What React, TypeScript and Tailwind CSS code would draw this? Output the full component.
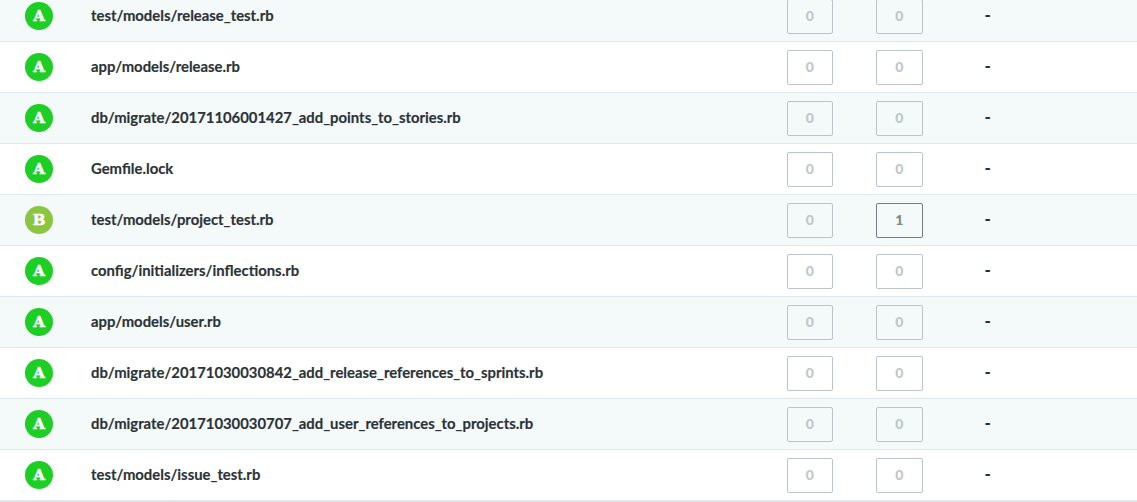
const ROWS = [
  { grade: 'A', path: 'test/models/release_test.rb', second: '0' },
  { grade: 'A', path: 'app/models/release.rb', second: '0' },
  { grade: 'A', path: 'db/migrate/20171106001427_add_points_to_stories.rb', second: '0' },
  { grade: 'A', path: 'Gemfile.lock', second: '0' },
  { grade: 'B', path: 'test/models/project_test.rb', second: '1' },
  { grade: 'A', path: 'config/initializers/inflections.rb', second: '0' },
  { grade: 'A', path: 'app/models/user.rb', second: '0' },
  { grade: 'A', path: 'db/migrate/20171030030842_add_release_references_to_sprints.rb', second: '0' },
  { grade: 'A', path: 'db/migrate/20171030030707_add_user_references_to_projects.rb', second: '0' },
  { grade: 'A', path: 'test/models/issue_test.rb', second: '0' },
]

function Grade({ grade }: { grade: string }) {
  const color = grade === 'A' ? 'bg-[#1dce24]' : 'bg-[#8cc53f]'
  return (
    <span
      className={`flex h-[28px] w-[28px] items-center justify-center rounded-full text-[15px] font-bold leading-none text-white [-webkit-text-stroke:0.5px_white] ${color}`}
      style={{ fontFamily: '"DejaVu Serif", serif' }}
    >
      {grade}
    </span>
  )
}

function Count({ value }: { value: string }) {
  const active = value !== '0'
  return (
    <span
      className={`flex h-[35px] w-[46.5px] shrink-0 items-center justify-center rounded-[2px] border pb-[1px] text-[14px] font-black ${
        active ? 'border-[#727c80] text-[#7d8689]' : 'border-[#bcc4c7] text-[#bfc7ca]'
      }`}
    >
      {value}
    </span>
  )
}

export default function App() {
  return (
    <div
      className="h-[502px] w-full overflow-hidden bg-white text-[#2b3238]"
      style={{ fontFamily: 'Lato, sans-serif' }}
    >
      <div className="-mt-[9px] flex flex-col border-b border-[#dfe8ed]">
        {ROWS.map((row, i) => (
          <div
            key={row.path}
            className={`flex h-[51px] items-center border-b border-[#dfe8ed] ${i % 2 === 0 ? 'bg-[#f4f9fa]' : 'bg-white'}`}
          >
            <div className="ml-[25px] w-[66px] shrink-0">
              <Grade grade={row.grade} />
            </div>
            <div className="w-[695.5px] shrink-0 pb-[2px] text-[14.85px] font-bold [-webkit-text-stroke:0.15px_#2b3238]">
              {row.path}
            </div>
            <Count value="0" />
            <div className="w-[43px] shrink-0" />
            <Count value={row.second} />
            <div className="ml-[62px] pb-[2px] text-[17px] font-black">-</div>
          </div>
        ))}
      </div>
    </div>
  )
}
